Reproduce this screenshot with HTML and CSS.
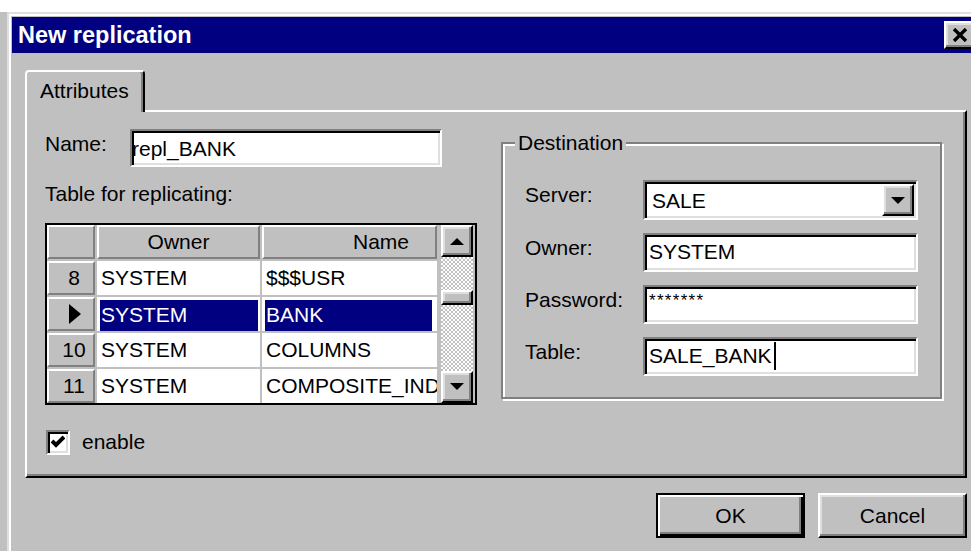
FILE: index.html
```html
<!DOCTYPE html>
<html lang="en">
<head>
<meta charset="utf-8">
<title>New replication</title>
<link rel="stylesheet" href="styles.css">
</head>
<body>
<div class="window">
  <div class="titlebar">
    <span class="title">New replication</span>
    <button class="close raised" type="button" aria-label="Close">
      <svg width="16" height="14" viewBox="0 0 16 14"><path d="M2 1 L14 13 M14 1 L2 13" stroke="#000" stroke-width="3.4" fill="none"/></svg>
    </button>
  </div>

  <div class="client">
    <div class="tabs">
      <div class="tab">Attributes</div>
    </div>

    <div class="panel">
      <div class="col-left">
        <div class="name-row">
          <span class="lbl name-lbl">Name:</span>
          <div class="edit name-edit">repl_BANK</div>
        </div>

        <div class="lbl table-lbl">Table for replicating:</div>

        <div class="dbgrid">
          <div class="cells">
            <div class="fixed"></div>
            <div class="fixed">Owner</div>
            <div class="fixed wide"><span>Name</span></div>

            <div class="fixed num">8</div>
            <div class="cell">SYSTEM</div>
            <div class="cell wide"><span>$$$USR</span></div>

            <div class="fixed ind">
              <svg width="12" height="20" viewBox="0 0 12 20"><polygon points="0,0 12,10 0,20" fill="#000"/></svg>
            </div>
            <div class="cell sel"><span>SYSTEM</span></div>
            <div class="cell sel sel-wide"><span>BANK</span></div>

            <div class="fixed num">10</div>
            <div class="cell">SYSTEM</div>
            <div class="cell wide"><span>COLUMNS</span></div>

            <div class="fixed num">11</div>
            <div class="cell">SYSTEM</div>
            <div class="cell wide"><span>COMPOSITE_INDEXES</span></div>
          </div>

          <div class="vscroll">
            <div class="sbtn raised">
              <svg width="14" height="8" viewBox="0 0 14 8"><polygon points="0,8 14,8 7,1" fill="#000"/></svg>
            </div>
            <div class="track">
              <div class="thumb raised"></div>
            </div>
            <div class="sbtn raised">
              <svg width="14" height="8" viewBox="0 0 14 8"><polygon points="0,0 14,0 7,7" fill="#000"/></svg>
            </div>
          </div>
        </div>

        <div class="check-row">
          <span class="checkbox">
            <svg width="14" height="14" viewBox="0 0 14 14"><polyline points="1,6 5,10 13,2" stroke="#000" stroke-width="4" fill="none"/></svg>
          </span>
          <span>enable</span>
        </div>
      </div>

      <fieldset class="group">
        <legend>Destination</legend>
        <div class="form">
          <span class="lbl">Server:</span>
          <div class="combo">
            <span class="val">SALE</span>
            <span class="drop raised">
              <svg width="14" height="7" viewBox="0 0 14 7"><polygon points="0,0 14,0 7,7" fill="#000"/></svg>
            </span>
          </div>

          <span class="lbl">Owner:</span>
          <div class="edit field">SYSTEM</div>

          <span class="lbl">Password:</span>
          <div class="edit field pw">*******</div>

          <span class="lbl">Table:</span>
          <div class="edit field">SALE_BANK<span class="caret"></span></div>
        </div>
      </fieldset>
    </div>

    <div class="buttons">
      <button class="btn default" type="button">OK</button>
      <button class="btn raised" type="button">Cancel</button>
    </div>
  </div>
</div>
</body>
</html>
```

FILE: styles.css
```css
html, body {
  margin: 0;
  height: 100%;
  overflow: hidden;
}

body {
  box-sizing: border-box;
  padding: 12px 0 0 7px;
  background: linear-gradient(#fff 0 12px, #c0c0c0 12px);
  font-family: "Liberation Sans", Arial, sans-serif;
  font-size: 21px;
  line-height: 30px;
  color: #000;
}

/* ---- window frame ---- */
.window {
  width: 973px;
  height: 560px;
  box-sizing: border-box;
  background: #c0c0c0;
  border-top: 2px solid #dfdfdf;
  border-left: 2px solid #dfdfdf;
  box-shadow: inset 2px 2px 0 #fff;
  padding: 3px 0 0 3px;
}

.raised {
  box-sizing: border-box;
  background: #c0c0c0;
  border: 2px solid;
  border-color: #fff #000 #000 #fff;
  box-shadow: inset -2px -2px 0 #808080, inset 2px 2px 0 #dfdfdf;
}

.titlebar {
  height: 36px;
  background: #000080;
  color: #fff;
  display: flex;
  align-items: center;
  padding-left: 6px;
}

.title {
  font: bold 23.5px/36px "Liberation Sans", Arial, sans-serif;
  white-space: nowrap;
}

.close {
  margin-left: auto;
  margin-right: 4px;
  width: 32px;
  height: 28px;
  padding: 0;
  display: flex;
  align-items: center;
  justify-content: center;
}

.client {
  padding: 17px 13px 0;
}

/* ---- tab control ---- */
.tabs {
  display: flex;
}

.tab {
  position: relative;
  z-index: 1;
  width: 120px;
  height: 42px;
  box-sizing: border-box;
  margin-bottom: -2px;
  padding: 4px 0 0 13px;
  background: #c0c0c0;
  border-top: 2px solid #fff;
  border-left: 2px solid #fff;
  border-right: 2px solid #000;
  border-radius: 4px 4px 0 0;
  box-shadow: inset -2px 0 0 #808080;
}

.panel {
  height: 368px;
  box-sizing: border-box;
  border: 2px solid;
  border-color: #fff #000 #000 #fff;
  box-shadow: inset -2px -2px 0 #808080;
  display: flex;
  align-items: flex-start;
  gap: 24px;
  padding: 17px 0 0 18px;
}

/* ---- left column ---- */
.col-left {
  width: 432px;
  display: flex;
  flex-direction: column;
}

.lbl {
  white-space: nowrap;
}

.name-row {
  display: flex;
  align-items: flex-start;
}

.name-lbl {
  width: 85px;
}

.edit {
  box-sizing: border-box;
  background: #fff;
  border: 2px solid;
  border-color: #808080 #fff #fff #808080;
  box-shadow: inset 2px 2px 0 #000, inset -2px -2px 0 #dfdfdf;
  padding: 2px 2px 0 4px;
  white-space: nowrap;
  overflow: hidden;
}

.name-edit {
  width: 312px;
  height: 38px;
  padding: 3px 2px 0 0;
}

.table-lbl {
  margin-top: 12px;
}

/* ---- data grid ---- */
.dbgrid {
  margin-top: 14px;
  width: 432px;
  height: 182px;
  box-sizing: border-box;
  border: 2px solid #000;
  background: #c0c0c0;
  display: flex;
  gap: 4px;
}

.cells {
  width: 390px;
  display: grid;
  grid-template-columns: 48px 163px 175px;
  grid-auto-rows: 34px;
  gap: 2px;
}

.fixed {
  box-sizing: border-box;
  border: 2px solid;
  border-color: #fff #808080 #808080 #fff;
  background: #c0c0c0;
  line-height: 30px;
  text-align: center;
  white-space: nowrap;
  overflow: hidden;
}

.num {
  padding-left: 6px;
}

.ind {
  display: flex;
  align-items: center;
  justify-content: center;
  padding-left: 8px;
}

.cell {
  background: #fff;
  line-height: 34px;
  padding-left: 4px;
  white-space: nowrap;
  overflow: hidden;
}

.wide > span {
  display: block;
  width: 234px;
}

.fixed.wide > span {
  text-align: center;
}

.cell.sel {
  padding: 3px 2px 0 3px;
}

.cell.sel-wide {
  padding-right: 5px;
}

.cell.sel > span {
  display: block;
  height: 31px;
  line-height: 29px;
  padding-left: 1px;
  background: #000080;
  color: #fff;
}

.vscroll {
  width: 32px;
  display: flex;
  flex-direction: column;
}

.sbtn {
  height: 32px;
  display: flex;
  align-items: center;
  justify-content: center;
}

.track {
  flex: 1;
  padding-top: 33px;
  background: repeating-conic-gradient(#fff 0 25%, #c0c0c0 0 50%) 0 0 / 4px 4px;
}

.thumb {
  height: 15px;
}

.check-row {
  margin-top: 22px;
  display: flex;
  align-items: center;
  gap: 12px;
}

.checkbox {
  width: 24px;
  height: 25px;
  margin-left: 1px;
  box-sizing: border-box;
  background: #fff;
  border: 2px solid;
  border-color: #808080 #fff #fff #808080;
  box-shadow: inset 2px 2px 0 #000, inset -2px -2px 0 #dfdfdf;
  display: flex;
  align-items: center;
  justify-content: center;
}

/* ---- destination group ---- */
.group {
  margin: -1px 0 0;
  width: 441px;
  box-sizing: border-box;
  min-width: 0;
  padding: 0 0 21px 12px;
  border: 2px solid #808080;
  box-shadow: inset 2px 2px 0 #fff, 2px 2px 0 #fff;
}

.group legend {
  padding: 0 3px;
  line-height: 30px;
  background: #c0c0c0;
}

.form {
  display: grid;
  grid-template-columns: 118px 275px;
  row-gap: 13px;
  padding: 22px 0 0 10px;
}

.combo {
  height: 40px;
  box-sizing: border-box;
  background: #fff;
  border: 2px solid;
  border-color: #808080 #fff #fff #808080;
  box-shadow: inset 2px 2px 0 #000, inset -2px -2px 0 #dfdfdf;
  padding: 2px 2px 2px 7px;
  display: flex;
}

.combo .val {
  flex: 1;
  padding-top: 2px;
  line-height: 30px;
}

.drop {
  width: 32px;
  height: 32px;
  display: flex;
  align-items: center;
  justify-content: center;
}

.field {
  height: 39px;
}

.pw {
  font-size: 17px;
  letter-spacing: 1.3px;
  line-height: 24px;
}

.caret {
  display: inline-block;
  width: 2px;
  height: 28px;
  margin: 1px 0 0 2px;
  vertical-align: top;
  background: #000;
}

/* ---- dialog buttons ---- */
.buttons {
  display: flex;
  justify-content: flex-end;
  gap: 13px;
  margin-top: 15px;
}

.btn {
  width: 149px;
  height: 45px;
  padding: 0;
  font: inherit;
  line-height: 41px;
  color: #000;
}

.btn.default {
  box-sizing: border-box;
  background: #c0c0c0;
  border: 2px solid #000;
  box-shadow: inset 2px 2px 0 #fff, inset -2px -2px 0 #000, inset -4px -4px 0 #808080;
}
```
